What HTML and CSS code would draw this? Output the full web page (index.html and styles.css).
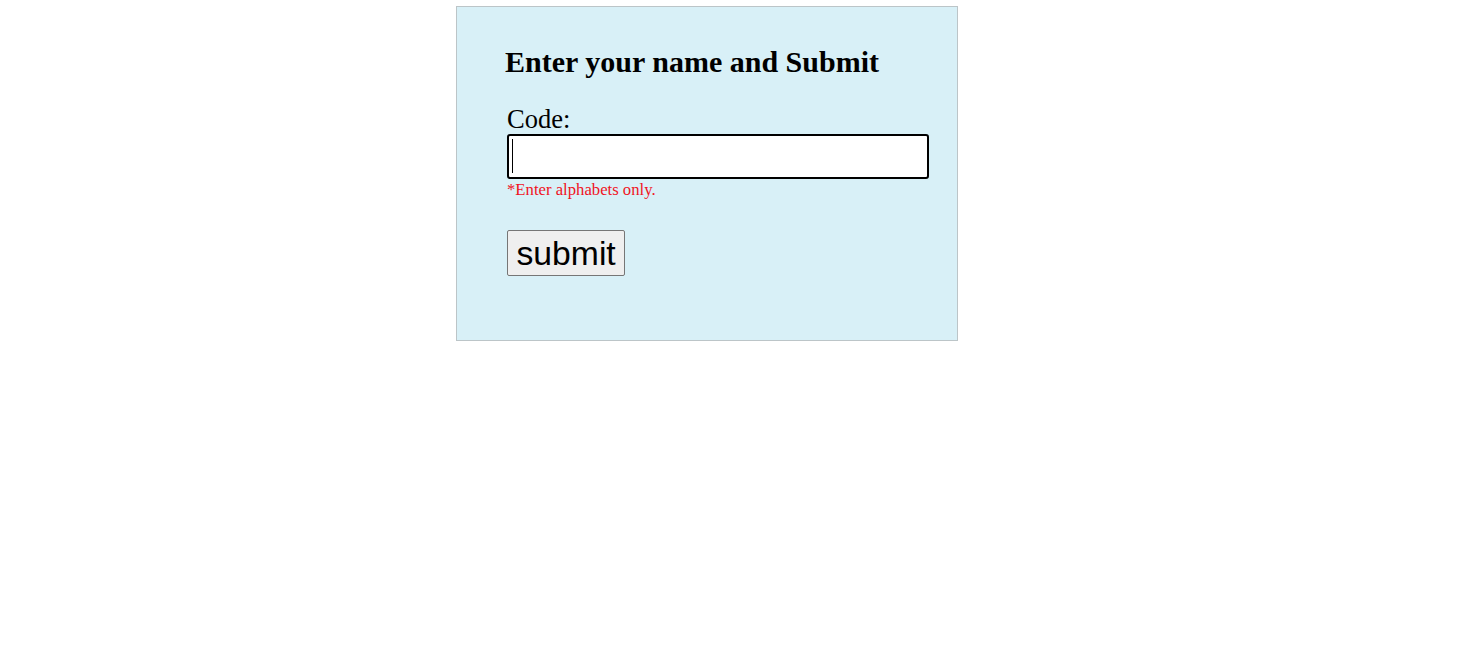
FILE: index.html
```html
<!DOCTYPE html>
<html>
<head>
<meta charset="utf-8">
<link rel="stylesheet" href="styles.css">
</head>
<body>
<div class="card">
  <h2 class="title">Enter your name and Submit</h2>
  <form class="form">
    <label class="label" for="code">Code:</label>
    <span class="field">
      <input class="input" id="code" type="text">
      <span class="caret"></span>
    </span>
    <span class="hint">*Enter alphabets only.</span>
    <button class="btn" type="button">submit</button>
  </form>
</div>
</body>
</html>
```
FILE: styles.css
```css
html, body {
  margin: 0;
  padding: 0;
  background: #fff;
  font-family: "Liberation Serif", "Times New Roman", serif;
}
.card {
  box-sizing: border-box;
  width: 502px;
  height: 335px;
  margin: 6px 0 0 456px;
  background: #d8f0f7;
  border: 1px solid #bcc5c8;
  padding: 37px 28px 0 48px;
}
.title {
  margin: 0;
  font-size: 30px;
  font-weight: bold;
  line-height: 36px;
}
.form {
  display: flex;
  flex-direction: column;
  align-items: flex-start;
  padding-left: 2px;
  margin-top: 24px;
}
.label {
  font-size: 26.5px;
  line-height: 30px;
}
.field {
  position: relative;
  display: block;
}
.input {
  box-sizing: border-box;
  width: 422px;
  height: 45px;
  margin: 0;
  border: 2px solid #000;
  border-radius: 3px;
  background: #fff;
  outline: none;
  font-size: 24px;
  padding: 0 3px;
}
.caret {
  position: absolute;
  left: 5px;
  top: 5px;
  width: 1px;
  height: 34px;
  background: #000;
}
.hint {
  color: #f0141e;
  font-size: 16.7px;
  line-height: 20px;
  margin-top: 1px;
}
.btn {
  margin-top: 30px;
  font-family: "Liberation Sans", Arial, sans-serif;
  font-size: 33.7px;
  line-height: 39px;
  padding: 3px 8.5px 2px;
  min-height: 46px;
  background: #efefef;
  border: 1px solid #767676;
  border-radius: 2px;
  color: #000;
}
```
